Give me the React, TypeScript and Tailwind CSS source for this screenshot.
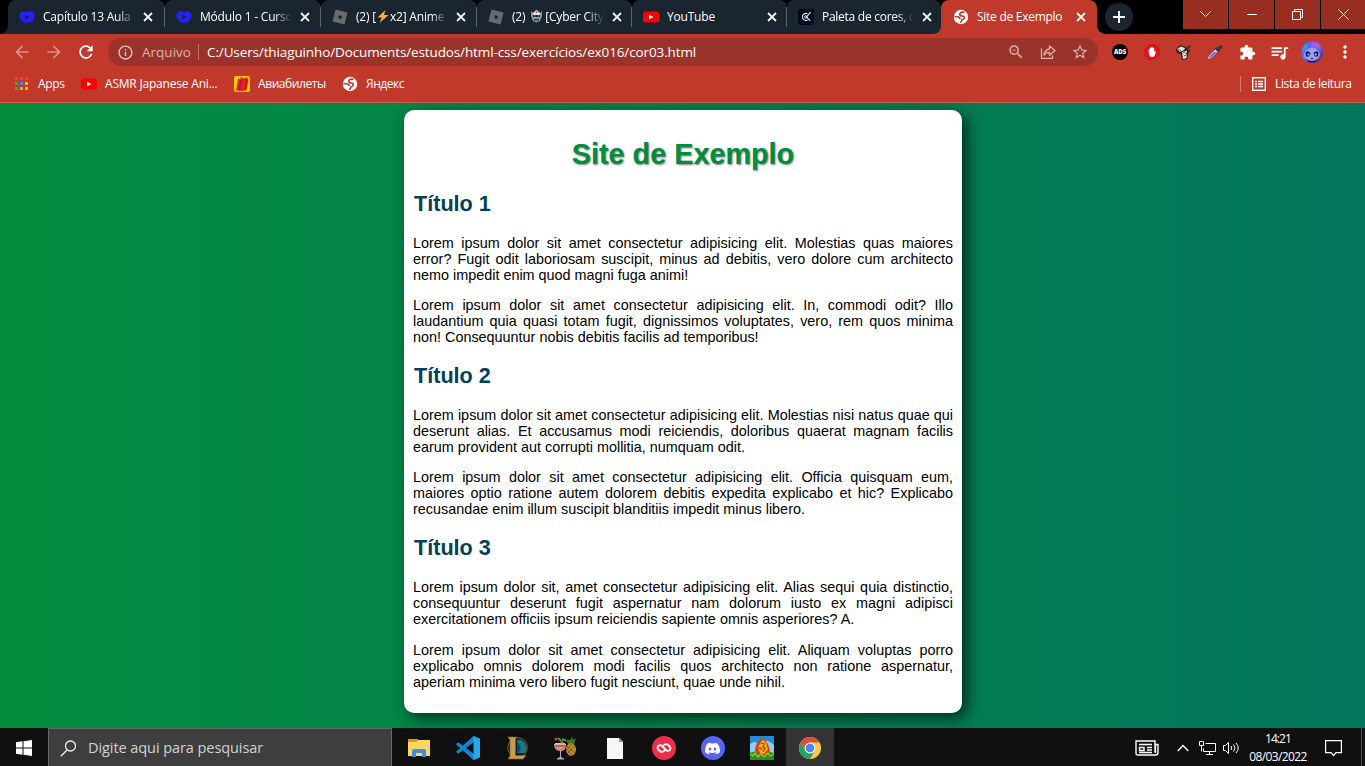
import React from "react";
import { MdExtension, MdQueueMusic, MdStarBorder, MdZoomOut, MdRefresh, MdArrowBack, MdArrowForward, MdMoreVert, MdInfoOutline } from "react-icons/md";
import { SiDiscord } from "react-icons/si";

const ui = "font-['Open_Sans','Noto_Sans',sans-serif]";

function Heart() {
  return (
    <svg width="16" height="16" viewBox="0 0 16 16" className="shrink-0">
      <path d="M.6 8C0 4.300 1.800 2.200 4.500 2.200 6 2.200 7 3.200 8 3.200s2-1 3.500-1C14.200 2.200 16 4.300 15.400 8c-.5 3.300-3.500 5.800-7.400 5.800S1.100 11.300.6 8Z" fill="#2420f8" />
      <path d="M6.200 5.600v5L10.600 8.100Z" fill="#1b2530" />
    </svg>
  );
}

function Roblox() {
  return (
    <svg width="16" height="16" viewBox="0 0 16 16" className="shrink-0">
      <path fillRule="evenodd" d="M3.500 0.500 15.500 3.500 12.500 15.500 .5 12.500ZM7 6.200 6.200 9.200 9.200 10 10 7Z" fill="#696a6c" />
    </svg>
  );
}

function YouTube() {
  return (
    <svg width="16" height="16" viewBox="0 0 16 16" className="shrink-0">
      <rect y="2.500" width="16" height="11" rx="2.500" fill="#f00" />
      <path d="M6 5.700v4.700L10.500 8Z" fill="#fff" />
    </svg>
  );
}

function Palette() {
  return (
    <svg width="16" height="16" viewBox="0 0 16 16" className="shrink-0" fill="none" stroke="#e8edf5">
      <rect width="16" height="16" rx="2" fill="#020a22" stroke="none" />
      <path d="M9.500 4.800A3.500 3.500 0 1 0 9.500 11M12.700 3.200 8.500 8l3.700 3.800" strokeWidth="1.100" />
      <circle cx="7.800" cy="8" r="1.200" strokeWidth=".9" />
    </svg>
  );
}

function Globe() {
  return (
    <svg width="16" height="16" viewBox="0 0 16 16" className="shrink-0">
      <circle cx="8" cy="8" r="7.200" fill="#fff" />
      <path d="M11.500 3.300Q7.200 2.500 6.800 5.300q.2 1.900 2.700 1.700 2.300.2 1.700 2.300-.6 1.500-2.300 1.700-.2 1.600-1.700 2.600M1.500 7.500q2.700.2 4.200.5 1.500.6 1.200 2.200" fill="none" stroke="#c0392b" strokeWidth="1.700" />
    </svg>
  );
}

function Robot() {
  return (
    <svg width="13" height="14" viewBox="0 0 13 14" className="mx-[2px] inline-block align-[-2px]">
      <path d="M1 2 3 4h7l2-2v5l-2 5-3.500 1.500L3 12 1 7Z" fill="#8f999d" />
      <path d="M3 4 6.500.8 10 4v3H3Z" fill="#dce4e8" />
      <path d="M3 6h7v2H3Z" fill="#142128" />
      <path d="M4 6.500h1.500v1H4ZM7.700 6.500h1.500v1H7.700Z" fill="#19d6dc" />
      <path d="M5.700 2h1.600v2H5.700Z" fill="#e2463b" />
      <path d="M4 10h5v1.500H4Z" fill="#26333a" />
    </svg>
  );
}

function Bolt() {
  return (
    <svg width="12" height="13" viewBox="0 0 12 13" className="mx-[1px] inline-block align-[-2px]">
      <path d="M8.500 0 .5 7.500h4.300L2.500 13 11.500 5H7Z" fill="#ffb02e" />
    </svg>
  );
}

function Close() {
  return (
    <svg width="10" height="10" viewBox="0 0 10 10" className="shrink-0" stroke="#f1f3f4" strokeWidth="1.800">
      <path d="M1 1l8 8M9 1 1 9" />
    </svg>
  );
}

type TabProps = { icon: React.ReactNode; children: React.ReactNode; width: string; fade?: boolean; last?: boolean };

function Tab({ icon, children, width, fade, last }: TabProps) {
  return (
    <div className={`${width} flex h-[34px] shrink-0 items-center rounded-t-[8px] bg-[#1b2530] ${last ? "rounded-br-[8px]" : ""}`}>
      <div className="ml-[11px] flex">{icon}</div>
      <div
        className={`ml-2 w-[93px] whitespace-nowrap text-[12px] tracking-[-0.2px] text-white ${
          fade ? "[mask-image:linear-gradient(to_right,black_75px,transparent_92px)]" : ""
        }`}
      >
        {children}
      </div>
      <div className="ml-[7px]"><Close /></div>
      <div className={`ml-auto h-5 w-px ${last ? "" : "bg-[#5b636b]"}`} />
    </div>
  );
}

function TabStrip() {
  return (
    <div className="flex h-[34px] bg-black">
      <div className="flex h-[34px] w-[8px] items-end">
        <div className="h-[8px] w-[8px] bg-[radial-gradient(circle_at_0_0,#000_7.500px,#1b2530_8px)]" />
      </div>
      <Tab width="w-[157px]" icon={<Heart />} fade><span className="tracking-[-0.23px]">Capítulo 13 Aula 0</span></Tab>
      <Tab width="w-[156px]" icon={<Heart />} fade>Módulo 1 - Curso</Tab>
      <Tab width="w-[156px]" icon={<Roblox />} fade>(2) [<Bolt />x2] Anime</Tab>
      <Tab width="w-[155px]" icon={<Roblox />} fade>(2) <Robot />[Cyber City</Tab>
      <Tab width="w-[155px]" icon={<YouTube />}>YouTube</Tab>
      <div className="flex bg-[linear-gradient(#000_8px,#c0392b_8px)]">
        <Tab width="w-[154px]" icon={<Palette />} fade last><span className="tracking-[-0.27px]">Paleta de cores, c</span></Tab>
      </div>
      <div className="flex h-[34px] w-[156px] shrink-0 items-center rounded-t-[8px] bg-[#c0392b]">
        <div className="ml-[12px] flex"><Globe /></div>
        <div className="ml-2 w-[93px] whitespace-nowrap text-[12px] tracking-[-0.27px] text-white">Site de Exemplo</div>
        <div className="ml-[6px]"><Close /></div>
      </div>
      <div className="flex w-[8px] items-end">
        <div className="h-[8px] w-[8px] bg-[radial-gradient(circle_at_100%_0,#000_7.500px,#c0392b_8px)]" />
      </div>
      <div className="mt-[3px] flex h-[28px] w-[28px] items-center justify-center rounded-full bg-[#1b2530]">
        <svg width="12" height="12" viewBox="0 0 12 12" stroke="#fff" strokeWidth="2"><path d="M6 0v12M0 6h12" /></svg>
      </div>
      <div className="ml-auto flex h-[29px] gap-px">
        <div className="flex w-[45px] items-center justify-center bg-[#982d22]">
          <svg width="11" height="7" viewBox="0 0 11 7" fill="none" stroke="#fff"><path d="M.5.5l5 5 5-5" /></svg>
        </div>
        <div className="flex w-[45px] items-center justify-center bg-[#982d22]"><div className="h-px w-[10px] bg-white" /></div>
        <div className="flex w-[45px] items-center justify-center bg-[#982d22]">
          <svg width="11" height="11" viewBox="0 0 11 11" fill="none" stroke="#fff"><path d="M.5 2.500h8v8h-8ZM2.500 2.500v-2h8v8h-2" /></svg>
        </div>
        <div className="flex w-[44px] items-center justify-center bg-[#982d22]">
          <svg width="11" height="11" viewBox="0 0 11 11" stroke="#fff"><path d="M.5.5l10 10M10.500.5l-10 10" /></svg>
        </div>
      </div>
    </div>
  );
}

function Toolbar() {
  return (
    <div className="flex h-[36px] items-center text-white">
      <MdArrowBack size={20} className="ml-[12px] text-[#d98f87]" />
      <MdArrowForward size={20} className="ml-[12px] text-[#d98f87]" />
      <MdRefresh size={20} className="ml-[12px]" />
      <div className="ml-[12px] flex h-[28px] w-[990px] items-center rounded-full bg-[#9b332a]">
        <MdInfoOutline size={17} className="ml-[9px] text-[#e0c6c3]" />
        <span className="ml-[8px] w-[56px] text-[13.500px] tracking-[0.02px] text-[#d8b2ae]">Arquivo</span>
        <span className="h-4 w-px bg-[#b9736c]" />
        <span className="ml-[8px] whitespace-nowrap text-[13.500px] tracking-[-0.12px]">C:/Users/thiaguinho/Documents/estudos/html-css/exercícios/ex016/cor03.html</span>
        <MdZoomOut size={18} className="ml-auto text-[#dcb2ae]" />
        <svg width="16" height="16" viewBox="0 0 16 16" className="ml-[15px]" fill="none" stroke="#dcb2ae" strokeWidth="1.300">
          <path d="M1.500 4.500v9.800h11V11.500M9.500 2v3C6 5.500 4.500 8 4 11c1.500-2 3-2.700 5.500-2.700V11.300L15 6.600Z" strokeLinejoin="round" />
        </svg>
        <MdStarBorder size={18} className="mr-[9px] ml-[15px] text-[#dcb2ae]" />
      </div>
      <div className="ml-[14px] flex h-4 w-4 items-center justify-center rounded-full bg-black text-[6px] font-extrabold">ADS</div>
      <svg width="16" height="16" viewBox="0 0 16 16" className="ml-4">
        <path d="M4.700 0h6.600L16 4.700v6.600L11.300 16H4.700L0 11.300V4.700Z" fill="#e1131a" />
        <path d="M4.700 9V5.200q.7-.9 1.300 0V3.800q.7-.9 1.400 0V3.200q.7-.9 1.400 0v.9q.8-.8 1.400.1V8l1-1q1-.3.8.7L10.500 12q-2 1.800-4.300.4Q4.700 11 4.700 9Z" fill="#fff" />
      </svg>
      <svg width="17" height="17" viewBox="0 0 17 17" className="ml-[15px]">
        <path d="M1 5 5 1l6 2 3 3-2 9-5 1-1-6-4-1Z" fill="#252525" />
        <path d="M2 5 6 2.500l4 1.500-1 2-4 2ZM7 8l5-1.500-.5 7.500-3.500 1Z" fill="#e6e3dd" />
        <path d="M8 9l2-1M9 12l2-1M3 5l3 2" stroke="#655" />
        <path d="M10 7 15.500 1.500M11 10l4-4" stroke="#34302e" strokeWidth="1.500" />
      </svg>
      <svg width="16" height="16" viewBox="0 0 16 16" className="ml-[15px]">
        <path d="M1 15 2 12 8.500 5.500l2 2L4 14Z" fill="#d3e9ff" />
        <path d="M2 14 3 12 7 8h2.500L4 13.500Z" fill="#2783e4" />
        <path d="M7.500 4.500l4 4 1-1.500 3-3.500q.5-2.500-2-2.500L10 3.500Z" fill="#3b3b43" />
      </svg>
      <MdExtension size={17} className="ml-[16px]" />
      <MdQueueMusic size={21} className="ml-[13px]" />
      <svg width="22" height="22" viewBox="0 0 22 22" className="ml-[11px]">
        <defs><linearGradient id="avatar" x1="0" y1="0" x2="1" y2="1"><stop stopColor="#3c4be0" /><stop offset=".45" stopColor="#6d72e8" /><stop offset="1" stopColor="#4a128f" /></linearGradient></defs>
        <circle cx="11" cy="11" r="11" fill="url(#avatar)" />
        <path d="M11 1q8 1 9 8l-5-3-5-1Z" fill="#b05ae8" />
        <path d="M1 11Q1 4 8 2L5 8Z" fill="#3b96f0" />
        <path d="M4 10q7-7 14 0l1 4q-2 6-8 6t-8-6Z" fill="#9b9ff0" />
        <path d="M4.500 11q3-2 5 1.500l-1.500 3H5Z M17.500 11q-3-2-5 1.500l1.500 3h3Z" fill="#1b1560" />
        <circle cx="7.300" cy="13.500" r="1" fill="#5fd6ff" /><circle cx="14.700" cy="13.500" r="1" fill="#e9d0ff" />
        <path d="M9.500 17h3L11 18.500ZM5 18q6 4 12 0l-3 3.500H8Z" fill="#29145e" />
      </svg>
      <MdMoreVert size={20} className="ml-[12px]" />
    </div>
  );
}

const appDots = ["#ea4335", "#ea4335", "#ea4335", "#34a853", "#4285f4", "#fbbc04", "#34a853", "#fbbc04", "#fbbc04"];

function Bookmarks() {
  return (
    <div className="flex h-[33px] items-center border-b border-[#cc6055] pb-[5px] text-[12px] text-white">
      <svg width="13" height="13" viewBox="0 0 13 13" className="ml-[15px]">
        {appDots.map((c, i) => <rect key={i} x={(i % 3) * 5} y={Math.floor(i / 3) * 5} width="3" height="3" fill={c} />)}
      </svg>
      <span className="ml-[10px] w-[43px] tracking-[-0.3px]">Apps</span>
      <YouTube />
      <span className="ml-2 w-[129px] whitespace-nowrap tracking-[-0.2px]">ASMR Japanese Ani...</span>
      <svg width="16" height="16" viewBox="0 0 16 16">
        <rect width="16" height="16" rx="2" fill="#ffc800" />
        <path d="M4 3 7 2.500 6 1h2l.5 1.500L13 1.500 14.500 4 12.500 14 8 15 2 14.500Z" fill="#e31e24" />
        <path d="M6.800 4 5.500 14.500M13 3l-1.500 11" stroke="#a50f18" strokeWidth=".9" />
      </svg>
      <span className="ml-2 w-[84px] whitespace-nowrap tracking-[-0.42px]">Авиабилеты</span>
      <Globe />
      <span className="ml-2 tracking-[-0.45px]">Яндекс</span>
      <span className="ml-auto h-4 w-px bg-[#d37b73]" />
      <svg width="14" height="14" viewBox="0 0 14 14" className="ml-[11px]" fill="none" stroke="#fff">
        <rect x=".7" y=".7" width="12.600" height="12.600" strokeWidth="1.400" />
        <path d="M3 4.500h2M6 4.500h5M3 7h2M6 7h5M3 9.500h2M6 9.500h5" strokeWidth="1.300" />
      </svg>
      <span className="mr-[13px] ml-[9px] w-[77px] whitespace-nowrap tracking-[-0.35px]">Lista de leitura</span>
    </div>
  );
}

const sections = [
  { title: "Título 1", paragraphs: [
    ["Lorem ipsum dolor sit amet consectetur adipisicing elit. Molestias quas maiores", "error? Fugit odit laboriosam suscipit, minus ad debitis, vero dolore cum architecto", "nemo impedit enim quod magni fuga animi!"],
    ["Lorem ipsum dolor sit amet consectetur adipisicing elit. In, commodi odit? Illo", "laudantium quia quasi totam fugit, dignissimos voluptates, vero, rem quos minima", "non! Consequuntur nobis debitis facilis ad temporibus!"],
  ] },
  { title: "Título 2", paragraphs: [
    ["Lorem ipsum dolor sit amet consectetur adipisicing elit. Molestias nisi natus quae qui", "deserunt alias. Et accusamus modi reiciendis, doloribus quaerat magnam facilis", "earum provident aut corrupti mollitia, numquam odit."],
    ["Lorem ipsum dolor sit amet consectetur adipisicing elit. Officia quisquam eum,", "maiores optio ratione autem dolorem debitis expedita explicabo et hic? Explicabo", "recusandae enim illum suscipit blanditiis impedit minus libero."],
  ] },
  { title: "Título 3", paragraphs: [
    ["Lorem ipsum dolor sit, amet consectetur adipisicing elit. Alias sequi quia distinctio,", "consequuntur deserunt fugit aspernatur nam dolorum iusto ex magni adipisci", "exercitationem officiis ipsum reiciendis sapiente omnis asperiores? A."],
    ["Lorem ipsum dolor sit amet consectetur adipisicing elit. Aliquam voluptas porro", "explicabo omnis dolorem modi facilis quos architecto non ratione aspernatur,", "aperiam minima vero libero fugit nesciunt, quae unde nihil."],
  ] },
];

function Page() {
  return (
    <main className="flex h-[625px] items-start justify-center bg-[linear-gradient(to_right,#038c3e,#03755c)] pt-[7px] font-['Liberation_Sans',Arial,sans-serif]">
      <article className="mr-[-1px] h-[603px] w-[558px] rounded-[10px] bg-white px-[9px] shadow-[5px_5px_15px_rgba(0,0,0,0.64)]">
        <h1 className="mt-[26px] mb-[19px] text-center text-[28.800px] leading-[36px] font-bold text-[#038c3e] [text-shadow:1px_1px_2px_rgba(0,0,0,0.5)]">Site de Exemplo</h1>
        {sections.map((s, n) => (
          <section key={s.title}>
            <h2 className="ml-px h-[44px] text-[21.600px] leading-[25px] font-bold text-[#034159]">{s.title}</h2>
            {s.paragraphs.map((p, i) => (
              <p key={i} className={`text-[14.400px] leading-[16px] text-black ${i === 1 ? "mb-[18px]" : n === 2 ? "mb-[15px]" : "mb-[14px]"}`}>
                {p.map((l, j) => <span key={j} className={`block whitespace-nowrap ${j < 2 ? "[text-align-last:justify]" : ""}`}>{l}</span>)}
              </p>
            ))}
          </section>
        ))}
      </article>
    </main>
  );
}

function Taskbar() {
  const slot = "flex h-[40px] w-[49px] items-center justify-center";
  return (
    <footer className="flex h-[40px] items-center bg-[#101010] text-white">
      <div className="flex w-[48px] justify-center">
        <svg width="16" height="16" viewBox="0 0 16 16" fill="#fff"><path d="M0 2.200 6.500 1.300V7.500H0ZM7.500 1.200 16 0v7.500H7.500ZM0 8.500h6.500v6.200L0 13.800ZM7.500 8.500H16V16l-8.500-1.200Z" /></svg>
      </div>
      <div className="flex h-[40px] w-[344px] items-center border border-[#686868] bg-[#3e3e3e]">
        <svg width="17" height="17" viewBox="0 0 17 17" className="ml-[11px]" fill="none" stroke="#eee" strokeWidth="1.300"><circle cx="10.500" cy="6" r="5" /><path d="M7 10 .8 16.200" /></svg>
        <span className="ml-[11px] text-[14.500px] tracking-[-0.07px] text-[#d2d2d2]">Digite aqui para pesquisar</span>
      </div>
      <div className="ml-[2px] flex">
        <div className={slot}>
          <svg width="22" height="18" viewBox="0 0 22 18"><path d="M0 0h9l1 1h12v16H0Z" fill="#ffd767" /><path d="M0 0h9l1 1-1.500 2H0Z" fill="#dc9a10" /><path d="M4 18v-6q0-2 2-2h10q2 0 2 2v6h-4v-4H8v4Z" fill="#3e8fd8" /></svg>
        </div>
        <div className={slot}>
          <svg width="24" height="24" viewBox="0 0 24 24"><path d="M17.500 0 24 2.800v18.400L17.500 24 0 8.200l2.200-2L18 18V6L2.200 17.800l-2.200-2Z" fill="#1386d0" /><path d="M17.500 0 24 2.800v18.400L17.500 24Z" fill="#29a8f2" /></svg>
        </div>
        <div className={slot}>
          <svg width="22" height="24" viewBox="0 0 22 24"><circle cx="11.500" cy="11.500" r="9.800" fill="#0d1a20" stroke="#786433" /><path d="M11 4a8 8 0 0 1 7.500 13H11Z" fill="#16778a" /><path d="M11 6q5 3 3 9l-3 1Z" fill="#0e4d61" /><path d="M2 1h8.500l-1 2v16.500H20l-3 3.500H2l2-3V4Z" fill="#c69a50" stroke="#8a642a" strokeWidth=".6" /></svg>
        </div>
        <div className={slot}>
          <svg width="23" height="24" viewBox="0 0 23 24">
            <path d="M14 8 12 4l4 0 2-3 1 3 3-2-2 6Z" fill="#3c7a20" /><ellipse cx="17" cy="13.500" rx="5" ry="6.300" fill="#c08a29" />
            <path d="M13 10l8 7M12.500 13l6 6M21 10l-8 8M18 8l-5.500 6" stroke="#6a4510" strokeWidth=".7" />
            <path d="M0 8h12c0 5-2 7-5 7v6l3 1.500v1H3v-1L6 21v-6C2 15 0 12 0 8Z" fill="#a7b1b8" /><path d="M1 9h10c0 3-2 5-5 5s-5-2-5-5Z" fill="#e6483a" />
            <path d="M2 11h8q-1 2-4 2.500T2 11Z" fill="#f49b71" /><path d="M1 7h10v1.500H1Z" fill="#c5d0d4" /><path d="M4 2l3 3M8 3l4 1.500" stroke="#34a631" strokeWidth="2" /><circle cx="2" cy="3" r="1.500" fill="#e3335c" /><circle cx="8" cy="6" r="1.500" fill="#dd3970" />
          </svg>
        </div>
        <div className={slot}>
          <svg width="16" height="21" viewBox="0 0 16 21"><path d="M0 0h12l4 4v17H0Z" fill="#f7f7f7" /><path d="M12 0v4h4Z" fill="#9b9b9b" /></svg>
        </div>
        <div className={slot}>
          <svg width="24" height="24" viewBox="0 0 24 24" fill="none" stroke="#fff" strokeLinecap="round"><circle cx="12" cy="12" r="12" fill="#ef2e49" stroke="none" /><path d="M13.300 13.300 9.800 9.800Q8 8.300 6.300 9.900 4.800 11.800 6.300 13.500L8 15.200Q10 16.800 12 14.900L13 13.900M10.700 10.700 14.200 14.200Q16 15.700 17.700 14.100 19.200 12.200 17.700 10.500L16 8.800Q14 7.200 12 9.100L11 10.100" strokeWidth="1.800" /></svg>
        </div>
        <div className={slot}><div className="flex h-6 w-6 items-center justify-center rounded-full bg-[#5865f2]"><SiDiscord size={15} /></div></div>
        <div className={slot}>
          <svg width="24" height="24" viewBox="0 0 24 24"><rect width="24" height="24" fill="#238bd6" /><path d="M0 8q5-4 8 0 8-7 16 1v9H0Z" fill="#8bd0ef" /><path d="M0 17q5-3 9 0 7-3 15 0v7H0Z" fill="#2f8b23" /><path d="M5 15q0-8 7-13 7 5 8 13-3 4-8 4t-7-4Z" fill="#e33912" /><path d="M12.500 3.500 8 11l2 6 4 1 4-5-2-6Z" fill="#ffb314" /><path d="M11 7l3 1-1 3 2 1-2 4M9 11l3 3" fill="none" stroke="#d82b0e" strokeWidth="1.300" /><path d="M0 18l2.500 2L5 17l3 4 3-3 3 3 4-4 2 3 4-2" fill="none" stroke="#8ad02b" strokeWidth="1.300" /></svg>
        </div>
        <div className="flex h-[40px] w-[48px] items-center justify-center bg-[#333]">
          <svg width="22" height="22" viewBox="0 0 22 22"><circle cx="11" cy="11" r="11" fill="#fccd3f" /><path d="M1.500 5.500A11 11 0 0 1 20.500 5.500H11L6.200 13.700Z" fill="#e14b3c" /><path d="M1.500 5.500A11 11 0 0 0 11 22l4.800-8.200L11 11 6.200 13.700Z" fill="#1fa463" /><circle cx="11" cy="11" r="5.500" fill="#fff" /><circle cx="11" cy="11" r="4.400" fill="#4587f3" /></svg>
        </div>
      </div>
      <svg width="24" height="16" viewBox="0 0 24 16" className="ml-auto" fill="none" stroke="#fff" strokeWidth="1.400"><path d="M20 4.500h3v8q0 2.500-2.500 2.500H3Q1 15 1 13V1h19v11.500M20.500 4v9" /><path d="M4 4.500h13M12 7.500h5M12 10h5M4 12.500h13M4.500 7.500h4.500v3h-4.500Z" /></svg>
      <svg width="12" height="8" viewBox="0 0 12 8" className="ml-[18px]" fill="none" stroke="#fff" strokeWidth="1.300"><path d="M.7 7 6 1.500 11.300 7" /></svg>
      <svg width="17" height="15" viewBox="0 0 17 15" className="ml-[10px]" fill="none" stroke="#fff"><path d="M6.500 2.500h10v8h-12v-3M.5.5h4v4h-4ZM2.500 4.500v6M10.500 10.500v3M7 13.500h7" /></svg>
      <svg width="17" height="14" viewBox="0 0 17 14" className="ml-[7px]" fill="none" stroke="#fff"><path d="M.5 4.500h2l3-3v11l-3-3h-2ZM8 5q1.500 2 0 4M10.500 3.500q3 3.500 0 7M13 2q4.500 5 0 10" /></svg>
      <div className="mb-px ml-[8px] flex w-[60px] flex-col items-center text-[12px] leading-[18px]"><span className="tracking-[-0.9px]">14:21</span><span className="tracking-[-0.6px]">08/03/2022</span></div>
      <svg width="17" height="17" viewBox="0 0 17 17" className="ml-[17px]" fill="none" stroke="#fff" strokeWidth="1.200"><path d="M.6.6h15.800v12H11L8.500 15.500 6 12.600H.6Z" /></svg>
      <div className="mr-[3px] ml-[19px] h-[40px] w-px bg-[#555]" />
    </footer>
  );
}

export default function App() {
  return (
    <div className={`h-[766px] w-[1365px] overflow-hidden ${ui}`}>
      <header className="h-[103px] bg-[#c0392b]"><TabStrip /><Toolbar /><Bookmarks /></header>
      <Page />
      <Taskbar />
    </div>
  );
}
